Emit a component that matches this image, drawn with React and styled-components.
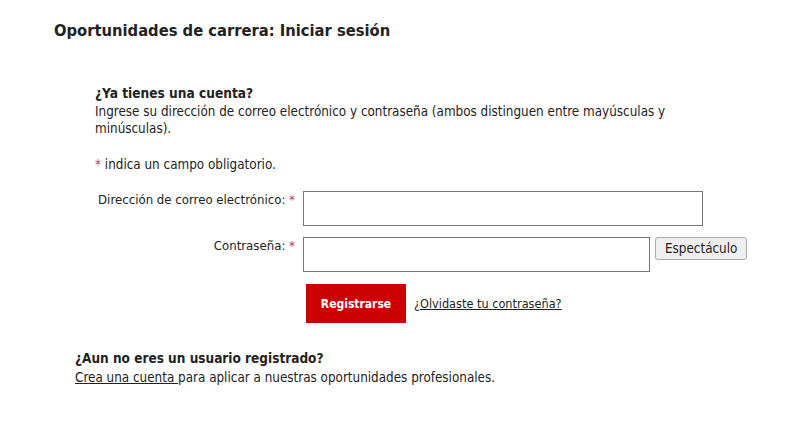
import React, { useState } from 'react';
import styled, { createGlobalStyle } from 'styled-components';

const GlobalStyle = createGlobalStyle`
  body {
    margin: 0;
    background: #fff;
    color: #222;
    font-family: "DejaVu Sans", Tahoma, sans-serif;
    font-stretch: condensed;
    font-size: 13.35px;
  }
`;

const Page = styled.main`
  width: 790px;
  height: 428px;
  padding: 20px 0 0 54px;
  box-sizing: border-box;
`;

const Title = styled.h1`
  margin: 0;
  font-size: 16.4px;
  font-weight: bold;
  line-height: 22px;
`;

const SignInBlock = styled.section`
  margin: 42px 0 0 41px;
  width: 600px;
`;

const Heading = styled.h2`
  margin: 0;
  font-size: ${p => p.$size || 13.6}px;
  font-weight: bold;
  line-height: ${p => p.$lh || 19}px;
`;

const Text = styled.p`
  margin: 0 0 ${p => p.$gap || 0}px;
  line-height: 17px;
`;

const Req = styled.span`
  color: #c6373b;
`;

const Form = styled.form`
  display: grid;
  grid-template-columns: 200px auto;
  column-gap: 8px;
  row-gap: 11px;
  margin-top: 18px;
  align-items: start;
`;

const Label = styled.label`
  text-align: right;
  white-space: nowrap;
  font-size: 13.1px;
  line-height: 17px;
`;

const Field = styled.div`
  display: flex;
  align-items: flex-start;
  gap: 5px;
`;

const Input = styled.input`
  width: ${p => p.$w}px;
  height: 35px;
  box-sizing: border-box;
  border: 1px solid #767676;
  border-radius: 0;
  padding: 0 6px;
  font: inherit;
`;

const ShowButton = styled.button`
  height: 23px;
  padding: 0 9px;
  font: inherit;
  color: #222;
  background: #efefef;
  border: 1px solid #a9a9a9;
  border-radius: 3px;
`;

const Actions = styled.div`
  grid-column: 2;
  display: flex;
  align-items: center;
  gap: 8px;
  margin-top: 1px;
  padding-left: 3px;
`;

const Submit = styled.button`
  width: 100px;
  height: 39px;
  border: 0;
  background: #cc0000;
  color: #fff;
  font: inherit;
  font-weight: bold;
  font-size: 12px;
`;

const Link = styled.a`
  color: #222;
  text-decoration: underline;
  font-size: ${p => p.$size ? `${p.$size}px` : 'inherit'};
`;

const RegisterBlock = styled.section`
  margin: 25px 0 0 21px;
`;

export default function App() {
  const [show, setShow] = useState(false);
  return (
    <>
      <GlobalStyle />
      <Page>
        <Title>Oportunidades de carrera: Iniciar sesión</Title>
        <SignInBlock>
          <Heading>¿Ya tienes una cuenta?</Heading>
          <Text $gap={19}>
            Ingrese su dirección de correo electrónico y contraseña (ambos distinguen entre mayúsculas y minúsculas).
          </Text>
          <Text>
            <Req>*</Req> indica un campo obligatorio.
          </Text>
          <Form onSubmit={e => e.preventDefault()}>
            <Label htmlFor="email">
              Dirección de correo electrónico: <Req>*</Req>
            </Label>
            <Field>
              <Input id="email" type="email" $w={400} />
            </Field>
            <Label htmlFor="pwd">
              Contraseña: <Req>*</Req>
            </Label>
            <Field>
              <Input id="pwd" type={show ? 'text' : 'password'} $w={347} />
              <ShowButton type="button" onClick={() => setShow(s => !s)}>
                Espectáculo
              </ShowButton>
            </Field>
            <Actions>
              <Submit type="submit">Registrarse</Submit>
              <Link href="#" $size={12.6}>¿Olvidaste tu contraseña?</Link>
            </Actions>
          </Form>
        </SignInBlock>
        <RegisterBlock>
          <Heading $size={13.5} $lh={21}>¿Aun no eres un usuario registrado?</Heading>
          <Text>
            <Link href="#">Crea una cuenta </Link>para aplicar a nuestras oportunidades profesionales.
          </Text>
        </RegisterBlock>
      </Page>
    </>
  );
}
